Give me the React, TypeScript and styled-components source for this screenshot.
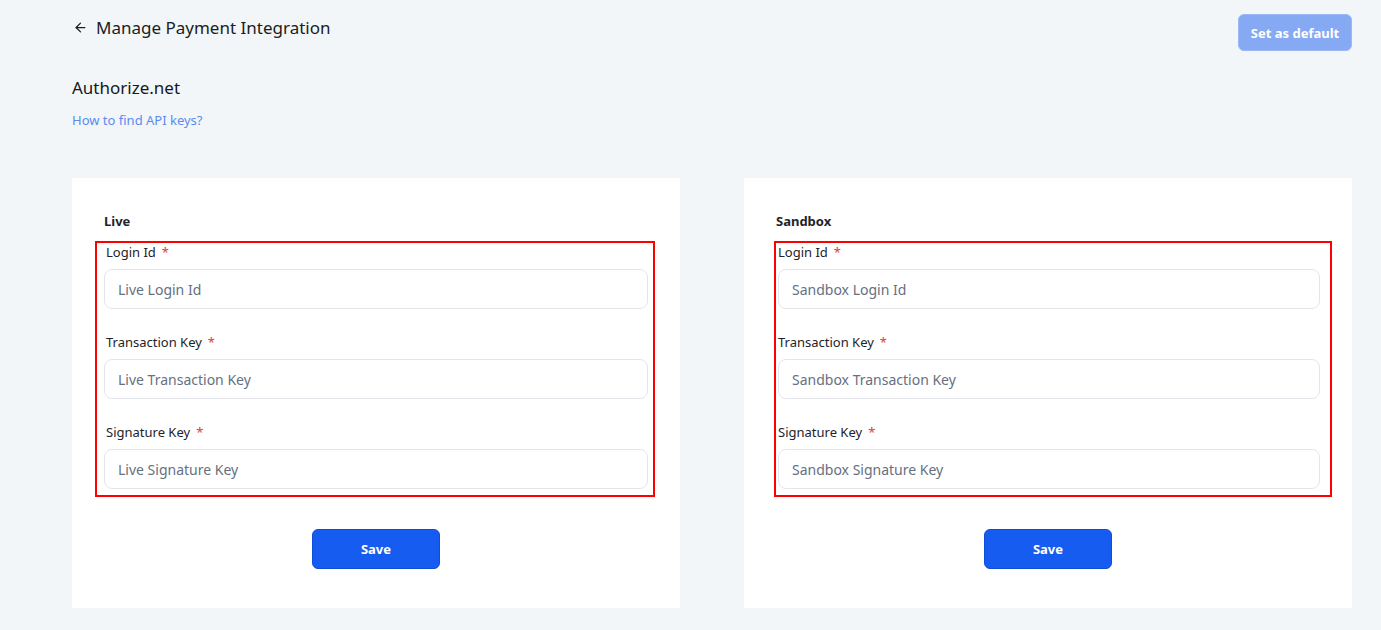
import React from "react"
import styled, { createGlobalStyle } from "styled-components"
import { ArrowLeft } from "lucide-react"

const GlobalStyle = createGlobalStyle`
    html, body {
        margin: 0;
        padding: 0;
        background: #f3f6f9;
        font-family: "Segoe UI", "Noto Sans", "Open Sans", sans-serif;
        color: #1f2329;
    }
    * {
        box-sizing: border-box;
    }
`

const Page = styled.div`
    min-height: 630px;
    padding: 14px 29px 22px 72px;
`

const Header = styled.div`
    display: flex;
    align-items: flex-start;
    justify-content: space-between;
    height: 37px;

    .title {
        display: flex;
        align-items: center;
        gap: 8px;
        height: 26px;
        font-size: 17px;
        color: #1a1d21;

        svg {
            margin-left: 1px;
        }
    }
`

const DefaultButton = styled.button`
    width: 114px;
    height: 37px;
    border: 1px solid #9bb8f5;
    border-radius: 6px;
    background: #86a9f4;
    color: white;
    font-family: inherit;
    font-weight: 700;
    font-size: 13px;
    cursor: not-allowed;
`

const Provider = styled.div`
    margin-top: 25px;
    font-size: 17px;
    line-height: 24px;
    color: #15181c;
`

const HelpLink = styled.a`
    display: block;
    margin-top: 11px;
    font-size: 13px;
    line-height: 18px;
    color: #5a8bef;
    text-decoration: none;
    cursor: pointer;
`

const Cards = styled.div`
    margin-top: 49px;
    display: grid;
    grid-template-columns: 1fr 1fr;
    gap: 64px;
`

const Card = styled.div`
    background: white;
    height: 430px;
    padding: 34px 32px 0;
    display: flex;
    flex-direction: column;

    h3 {
        margin: 0;
        font-size: 13px;
        line-height: 18px;
        font-weight: 700;
        color: #1f2329;
    }
`

// red annotation frame round the fields; offsets differ a little per card
const Highlight = styled.div<{ $mL: number; $pL: number; $mR: number; $pR: number }>`
    margin: 11px ${(p) => -p.$mR}px 0 ${(p) => -p.$mL}px;
    padding: 0 ${(p) => p.$pR}px 6px ${(p) => p.$pL}px;
    border: 2px solid #ff0000;
`

const Field = styled.div<{ $inset: number }>`
    margin-bottom: 24px;

    &:last-child {
        margin-bottom: 0;
    }

    label {
        display: block;
        padding-left: ${(p) => p.$inset}px;
        font-size: 13px;
        line-height: 18px;
        color: #1f2329;
        margin-bottom: 8px;

        span {
            color: #e53935;
            margin-left: 6px;
        }
    }

    input {
        display: block;
        width: 100%;
        height: 40px;
        border: 1px solid #e3e5ea;
        border-radius: 8px;
        padding: 0 13px;
        font-family: inherit;
        font-size: 14px;
        outline: none;
        background: white;

        &::placeholder {
            color: #667080;
        }
    }
`

const SaveButton = styled.button`
    align-self: center;
    margin-top: 32px;
    width: 128px;
    height: 40px;
    border: 1px solid #0f4fd6;
    border-radius: 6px;
    background: #175cf0;
    color: white;
    font-family: inherit;
    font-weight: 700;
    font-size: 13px;
    cursor: pointer;
`

interface IFrame {
    mL: number
    pL: number
    mR: number
    pR: number
}

interface IFormProps {
    title: string
    prefix: string
    frame: IFrame
    inset: number
}

const fields = ["Login Id", "Transaction Key", "Signature Key"]

const KeyForm: React.FC<IFormProps> = ({ title, prefix, frame, inset }) => {
    return (
        <Card>
            <h3>{title}</h3>
            <Highlight $mL={frame.mL} $pL={frame.pL} $mR={frame.mR} $pR={frame.pR}>
                {fields.map((name) => (
                    <Field key={name} $inset={inset}>
                        <label>
                            {name}
                            <span>*</span>
                        </label>
                        <input placeholder={`${prefix} ${name}`} />
                    </Field>
                ))}
            </Highlight>
            <SaveButton>Save</SaveButton>
        </Card>
    )
}

const App: React.FC = () => {
    return (
        <>
            <GlobalStyle />
            <Page>
                <Header>
                    <div className="title">
                        <ArrowLeft size={15} strokeWidth={2} color="#1a1d21" />
                        <span>Manage Payment Integration</span>
                    </div>
                    <DefaultButton disabled>Set as default</DefaultButton>
                </Header>
                <Provider>Authorize.net</Provider>
                <HelpLink>How to find API keys?</HelpLink>
                <Cards>
                    <KeyForm
                        title="Live"
                        prefix="Live"
                        frame={{ mL: 9, pL: 7, mR: 7, pR: 5 }}
                        inset={2}
                    />
                    <KeyForm
                        title="Sandbox"
                        prefix="Sandbox"
                        frame={{ mL: 2, pL: 2, mR: 12, pR: 10 }}
                        inset={0}
                    />
                </Cards>
            </Page>
        </>
    )
}

export default App
